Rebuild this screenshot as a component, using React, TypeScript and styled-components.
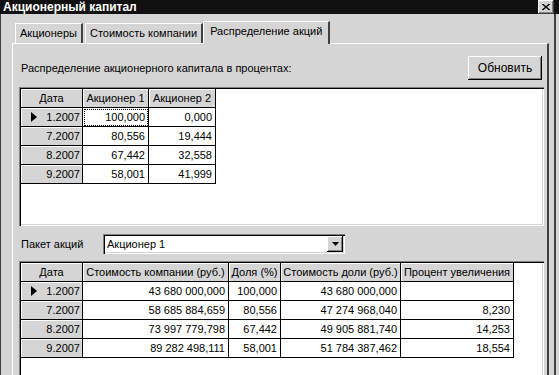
import { Fragment } from 'react';
import styled, { createGlobalStyle } from 'styled-components';

const GlobalStyle = createGlobalStyle`
  * { box-sizing: border-box; }
  html, body { margin: 0; padding: 0; overflow: hidden; }
  body {
    font-family: 'Liberation Sans', Arial, sans-serif;
    font-size: 11px;
    color: #000;
    background: #d5d5d5;
  }
`;

type Row = { date: string; values: string[] };

const shareRows: Row[] = [
  { date: '1.2007', values: ['100,000', '0,000'] },
  { date: '7.2007', values: ['80,556', '19,444'] },
  { date: '8.2007', values: ['67,442', '32,558'] },
  { date: '9.2007', values: ['58,001', '41,999'] },
];

const valueRows: Row[] = [
  { date: '1.2007', values: ['43 680 000,000', '100,000', '43 680 000,000', ''] },
  { date: '7.2007', values: ['58 685 884,659', '80,556', '47 274 968,040', '8,230'] },
  { date: '8.2007', values: ['73 997 779,798', '67,442', '49 905 881,740', '14,253'] },
  { date: '9.2007', values: ['89 282 498,111', '58,001', '51 784 387,462', '18,554'] },
];

const Indicator = () => (
  <Arrow width="6" height="10" viewBox="0 0 6 10">
    <path d="M0 0 L6 5 L0 10 Z" fill="#000" />
  </Arrow>
);

type DataGridProps = {
  columns: string;
  headers: string[];
  rows: Row[];
  height: number;
  focusFirst?: boolean;
};

const DataGrid = ({ columns, headers, rows, height, focusFirst }: DataGridProps) => (
  <Grid $height={height}>
    <Cells $columns={columns}>
      {headers.map((h) => (
        <HeadCell key={h}>{h}</HeadCell>
      ))}
      {rows.map((row, i) => (
        <Fragment key={row.date}>
          <FixedCell>
            {i === 0 && <Indicator />}
            {row.date}
          </FixedCell>
          {row.values.map((v, j) => (
            <DataCell key={j} $focus={!!focusFirst && i === 0 && j === 0}>
              {v}
            </DataCell>
          ))}
        </Fragment>
      ))}
    </Cells>
  </Grid>
);

const App = () => (
  <Window>
    <GlobalStyle />
    <TitleBar>
      <Title>Акционерный капитал</Title>
      <CloseButton>
        <svg width="8" height="7" viewBox="0 0 8 7">
          <path d="M0 0 L7 6 M1 0 L8 6 M7 0 L0 6 M8 0 L1 6" stroke="#000" strokeWidth="1" />
        </svg>
      </CloseButton>
    </TitleBar>
    <Body>
      <TabRow>
        <Tab>Акционеры</Tab>
        <Tab>Стоимость компании</Tab>
        <Tab $active>Распределение акций</Tab>
      </TabRow>
      <Sheet>
        <Toolbar>
          <Caption>Распределение акционерного капитала в процентах:</Caption>
          <Button>Обновить</Button>
        </Toolbar>
        <DataGrid
          columns="62px 66px 67px"
          headers={['Дата', 'Акционер 1', 'Акционер 2']}
          rows={shareRows}
          height={139}
          focusFirst
        />
        <ComboRow>
          <ComboLabel>Пакет акций</ComboLabel>
          <Combo>
            <ComboText>Акционер 1</ComboText>
            <DropButton>
              <svg width="7" height="4" viewBox="0 0 7 4">
                <path d="M0 0 H7 L3.5 4 Z" fill="#000" />
              </svg>
            </DropButton>
          </Combo>
        </ComboRow>
        <DataGrid
          columns="62px 146px 52px 120px 113px"
          headers={['Дата', 'Стоимость компании (руб.)', 'Доля (%)', 'Стоимость доли (руб.)', 'Процент увеличения']}
          rows={valueRows}
          height={120}
        />
      </Sheet>
    </Body>
  </Window>
);

export default App;

const Window = styled.div`
  display: flex;
  flex-direction: column;
  width: 559px;
  height: 375px;
  overflow: hidden;
  background: #d5d5d5;
`;

const TitleBar = styled.div`
  display: flex;
  align-items: center;
  justify-content: space-between;
  height: 19px;
  padding: 0 5px 0 3px;
  background: #111;
`;

const Title = styled.span`
  color: #fff;
  font-weight: bold;
  font-size: 12px;
`;

const CloseButton = styled.div`
  display: flex;
  align-items: center;
  justify-content: center;
  width: 16px;
  height: 14px;
  background: #d5d5d5;
  box-shadow: inset -1px -1px #404040, inset 1px 1px #fff, inset -2px -2px #808080;
`;

const Body = styled.div`
  flex: 1;
  display: flex;
  flex-direction: column;
  width: 556px;
  padding: 7px 5px 0 11px;
  border-left: 1px solid #404040;
  border-right: 2px solid #404040;
`;

const TabRow = styled.div`
  display: flex;
  align-items: flex-end;
  height: 22px;
  padding-left: 2px;
`;

const Tab = styled.div<{ $active?: boolean }>`
  position: relative;
  height: ${(p) => (p.$active ? 23 : 20)}px;
  margin: 0 ${(p) => (p.$active ? -1 : 1)}px ${(p) => (p.$active ? -1 : 0)}px;
  padding: ${(p) => (p.$active ? '3px 6px 0' : '3px 4px 0')};
  background: #d5d5d5;
  border-top: 1px solid #fff;
  border-left: 1px solid #fff;
  border-right: 2px solid #404040;
  white-space: nowrap;
  z-index: ${(p) => (p.$active ? 1 : 0)};
`;

const Sheet = styled.div`
  flex: 1;
  display: flex;
  flex-direction: column;
  padding: 12px 3px 0 6px;
  border-top: 1px solid #fff;
  border-left: 1px solid #fff;
  border-right: 2px solid #404040;
`;

const Toolbar = styled.div`
  display: flex;
  align-items: center;
  justify-content: space-between;
  height: 24px;
  padding-left: 2px;
`;

const Caption = styled.span`
  white-space: nowrap;
`;

const Button = styled.div`
  display: flex;
  align-items: center;
  justify-content: center;
  width: 74px;
  height: 24px;
  margin-right: 2px;
  font-size: 12px;
  background: #d5d5d5;
  box-shadow: inset -1px -1px #000, inset 1px 1px #fff, inset -2px -2px #808080;
`;

const Grid = styled.div<{ $height: number }>`
  height: ${(p) => p.$height}px;
  margin-top: 7px;
  padding: 2px;
  background: #fff;
  overflow: hidden;
  box-shadow: inset 1px 1px #808080, inset 2px 2px #000, inset -1px -1px #fff, inset -2px -2px #d5d5d5;

  & + & {
    margin-top: 8px;
  }
`;

const Cells = styled.div<{ $columns: string }>`
  display: grid;
  grid-template-columns: ${(p) => p.$columns};
  grid-auto-rows: 19px;
  width: max-content;
`;

const HeadCell = styled.div`
  padding: 0 2px;
  line-height: 18px;
  text-align: center;
  white-space: nowrap;
  overflow: hidden;
  background: #d5d5d5;
  border-right: 1px solid #000;
  border-bottom: 1px solid #000;
  box-shadow: inset 1px 1px #fff;
`;

const FixedCell = styled(HeadCell)`
  display: flex;
  align-items: center;
  justify-content: flex-end;
  text-align: right;
`;

const Arrow = styled.svg`
  margin: 0 auto 0 8px;
`;

const DataCell = styled.div<{ $focus?: boolean }>`
  padding: 0 3px;
  line-height: 18px;
  text-align: right;
  white-space: nowrap;
  background: #fff;
  border-right: 1px solid #000;
  border-bottom: 1px solid #000;
  outline: ${(p) => (p.$focus ? '1px dotted #000' : 'none')};
  outline-offset: -2px;
`;

const ComboRow = styled.div`
  display: flex;
  align-items: center;
  height: 20px;
  margin-top: 8px;
  padding-left: 2px;
`;

const ComboLabel = styled.span`
  width: 82px;
`;

const Combo = styled.div`
  display: flex;
  align-items: center;
  justify-content: space-between;
  width: 242px;
  height: 20px;
  padding: 2px;
  background: #fff;
  box-shadow: inset 1px 1px #808080, inset 2px 2px #000, inset -1px -1px #fff, inset -2px -2px #d5d5d5;
`;

const ComboText = styled.span`
  padding-left: 2px;
`;

const DropButton = styled.div`
  display: flex;
  align-items: center;
  justify-content: center;
  width: 16px;
  height: 16px;
  background: #d5d5d5;
  box-shadow: inset -1px -1px #000, inset 1px 1px #fff, inset -2px -2px #808080;
`;
